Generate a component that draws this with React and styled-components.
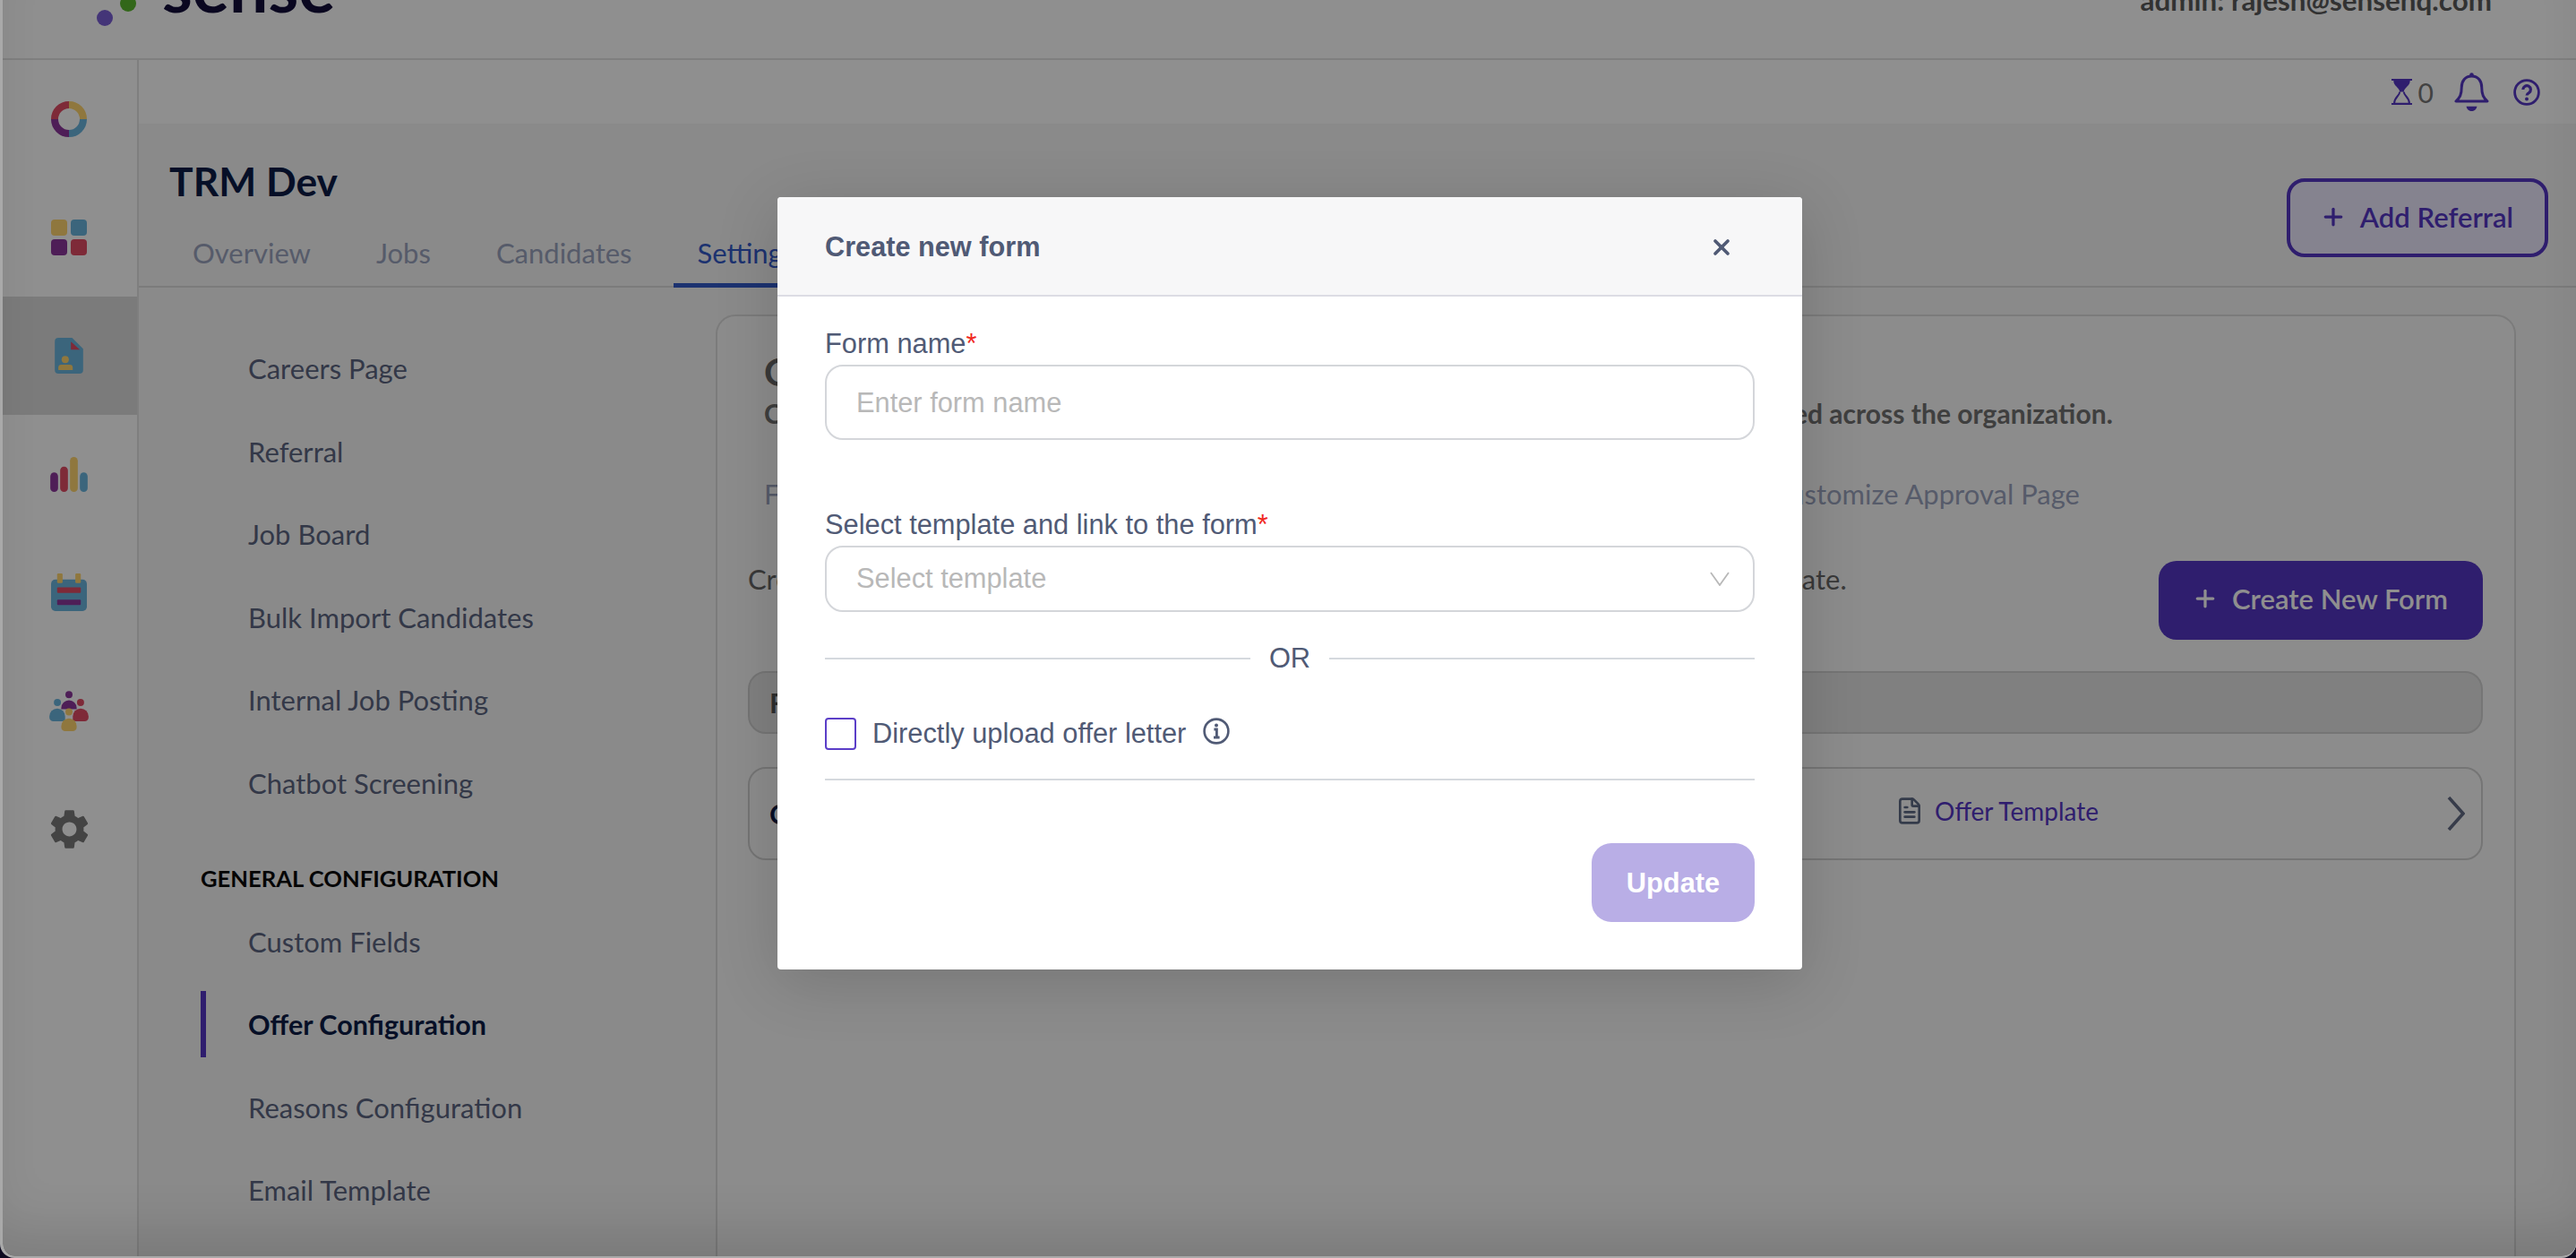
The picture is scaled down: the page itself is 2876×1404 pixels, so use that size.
import React from "react";
import styled, { createGlobalStyle } from "styled-components";
import { MdSettings } from "react-icons/md";
import { FileText, Plus, X } from "lucide-react";

const GlobalStyle = createGlobalStyle`
  html, body { margin: 0; padding: 0; height: 100%; background: #0d0a20; }
  * { box-sizing: border-box; }
  body { font-family: Lato, "Liberation Sans", sans-serif; }
`;

const PURPLE = "#5436c4";
const SLATE = "#505a75";
const GOLD = "#ffd56f";
const BLUE = "#6ab5de";
const PLUM = "#8c379b";
const RED = "#e14b64";

// ─── window ──────────────────────────────────────────

const Screen = styled.div`
  width: 2876px;
  height: 1404px;
  background: #0d0a20;
  overflow: hidden;
`;

const Window = styled.div`
  position: relative;
  width: 100%;
  height: 100%;
  background: #fff;
  border-left: 3px solid #a9a9a9;
  border-bottom: 2px solid #a9a9a9;
  border-radius: 0 0 16px 16px;
  overflow: hidden;
  display: flex;
  flex-direction: column;
`;

const Header = styled.header`
  flex: none;
  height: 67px;
  display: flex;
  justify-content: space-between;
  background: #fff;
  border-bottom: 2px solid #e3e3e3;
  overflow: hidden;
`;

const Logo = styled.div`
  display: flex;
  align-items: flex-end;
  height: 30px;
  margin: 0 0 0 98px;
`;

const LogoName = styled.span`
  margin: 0 0 -4px 26px;
  font-size: 77px;
  line-height: 100px;
  font-weight: 700;
  color: #120e3a;
`;

const AdminName = styled.span`
  margin: -18px 94px 0 0;
  font-size: 31.4px;
  line-height: 36px;
  font-weight: 700;
  color: #5a5a5a;
`;

const Layout = styled.div`
  flex: 1;
  min-height: 0;
  display: flex;
`;

// ─── left rail ───────────────────────────────────────

const Rail = styled.nav`
  flex: none;
  width: 152px;
  background: #fff;
  border-right: 2px solid #e3e3e3;
`;

const RailItem = styled.div`
  height: 132px;
  display: flex;
  align-items: center;
  justify-content: center;
  padding-right: 2px;
  background: ${(p) => (p.$active ? "#dcdcdc" : "transparent")};
  color: #7a7a7a;
`;

// ─── main ────────────────────────────────────────────

const Main = styled.main`
  flex: 1;
  min-width: 0;
  display: flex;
  flex-direction: column;
  background: #f6f6f6;
`;

const TopStrip = styled.div`
  flex: none;
  height: 71px;
  display: flex;
  align-items: center;
  justify-content: flex-end;
  padding: 0 40px 0 0;
  background: #fff;
  color: ${PURPLE};
`;

const Count = styled.span`
  margin: 0 23px 0 7px;
  font-size: 30px;
  color: #777;
`;

const BellGlyph = styled.svg`
  margin: 0 27px 0 0;
`;

const PageHead = styled.div`
  flex: none;
  height: 183px;
  display: flex;
  justify-content: space-between;
  padding: 0 31px 0 34px;
  border-bottom: 2px solid #dcdcdc;
`;

const PageTitle = styled.h1`
  margin: 39px 0 0;
  font-size: 44.4px;
  line-height: 50px;
  font-weight: 700;
  color: #0c1c46;
`;

const Tabs = styled.div`
  display: flex;
  gap: 21px;
  margin-top: 20px;
`;

const Tab = styled.div`
  height: 74px;
  padding: 0 26px;
  display: flex;
  align-items: center;
  font-size: 31px;
  color: ${(p) => (p.$active ? "#3359c8" : "#9aa3bd")};
  border-bottom: 5px solid ${(p) => (p.$active ? "#3359c8" : "transparent")};
`;

const OutlineButton = styled.button`
  height: 88px;
  width: 292px;
  margin-top: 61px;
  padding: 0 2px 2px 0;
  display: flex;
  align-items: center;
  justify-content: center;
  gap: 15px;
  font: 600 31px Lato, sans-serif;
  color: ${PURPLE};
  background: #eeeaff;
  border: 4px solid ${PURPLE};
  border-radius: 20px;
`;

const Split = styled.div`
  flex: 1;
  min-height: 0;
  display: flex;
`;

const SideMenu = styled.div`
  flex: none;
  width: 644px;
  padding: 53px 0 0 69px;
`;

const MenuItem = styled.div`
  height: 74px;
  margin: 0 0 18.5px;
  padding-left: 47px;
  display: flex;
  align-items: center;
  font-size: ${(p) => (p.$active ? 30.5 : 31)}px;
  font-weight: ${(p) => (p.$active ? 700 : 400)};
  color: ${(p) => (p.$active ? "#0c1c46" : "#5c6580")};
  border-left: 6px solid ${(p) => (p.$active ? PURPLE : "transparent")};
`;

const MenuHeading = styled.div`
  height: 40px;
  margin: 49px 0 14px;
  display: flex;
  align-items: center;
  font-size: 25.6px;
  font-weight: 700;
  color: #0a0a0a;
`;

const Card = styled.section`
  flex: 1;
  min-width: 0;
  height: 1200px;
  margin: 30px 67px 0 0;
  padding: 37px 35px 0 34px;
  background: #fafafa;
  border: 2px solid #dcdcdc;
  border-radius: 22px;
`;

const CardTitle = styled.h2`
  margin: 0 0 0 18px;
  font-size: 42px;
  line-height: 50px;
  font-weight: 700;
  color: #666;
`;

const CardSubtitle = styled.p`
  margin: 1px 0 0 18px;
  font-size: 30.06px;
  line-height: 40px;
  font-weight: 700;
  white-space: nowrap;
  color: #707070;
`;

const SubTabs = styled.div`
  display: flex;
  justify-content: space-between;
  width: 1469px;
  margin: 45px 0 0 18px;
  font-size: 31px;
  line-height: 50px;
  color: #9aa3bd;
`;

const IntroRow = styled.div`
  display: flex;
  justify-content: space-between;
  margin-top: 50px;
`;

const IntroText = styled.p`
  margin: 0;
  font-size: 31px;
  line-height: 40px;
  white-space: nowrap;
  color: #666;
`;

const PrimaryButton = styled.button`
  width: 362px;
  height: 88px;
  padding: 0 2px 4px 0;
  display: flex;
  align-items: center;
  justify-content: center;
  gap: 15px;
  font: 600 31px Lato, sans-serif;
  color: #fff;
  background: ${PURPLE};
  border: none;
  border-radius: 20px;
`;

const TableHead = styled.div`
  height: 70px;
  margin-top: 35px;
  padding-left: 22px;
  display: flex;
  align-items: center;
  font-size: 31px;
  font-weight: 700;
  color: #555;
  background: #e4e4e4;
  border: 2px solid #d0d0d0;
  border-radius: 20px;
`;

const TableRow = styled.div`
  height: 104px;
  margin-top: 37px;
  padding: 0 18px 0 22px;
  display: flex;
  align-items: center;
  border: 2px solid #d0d0d0;
  border-radius: 20px;
`;

const RowName = styled.span`
  flex: 1;
  font-size: 31px;
  font-weight: 700;
  color: #0c1c46;
`;

const RowLink = styled.span`
  display: flex;
  align-items: center;
  gap: 12px;
  margin: 0 389px 7px 0;
  font-size: 28px;
  color: ${PURPLE};
`;

const RowFile = styled(FileText)`
  color: #5e6a85;
`;

// ─── dialog ──────────────────────────────────────────

const Backdrop = styled.div`
  position: absolute;
  inset: 0;
  display: flex;
  justify-content: center;
  align-items: flex-start;
  padding: 220px 0 0 1px;
  background: rgba(0, 0, 0, 0.44);
  box-shadow: inset 0 -46px 60px -20px rgba(0, 0, 0, 0.13);
`;

const Dialog = styled.div`
  width: 1144px;
  background: #fff;
  border-radius: 4px;
  box-shadow: 0 14px 70px rgba(0, 0, 0, 0.16);
  font-family: "Liberation Sans", Arial, sans-serif;
  color: ${SLATE};
`;

const DialogHeader = styled.div`
  height: 111px;
  display: flex;
  align-items: center;
  justify-content: space-between;
  padding: 2px 76px 0 53px;
  background: #f7f7f8;
  border-bottom: 2px solid #dcdce4;
  border-radius: 4px 4px 0 0;
`;

const DialogTitle = styled.h3`
  margin: 0;
  font-size: 30.7px;
  font-weight: 700;
  color: ${SLATE};
`;

const CloseIcon = styled(X)`
  color: ${SLATE};
`;

const DialogBody = styled.div`
  padding: 35px 53px 53px;
`;

const FieldLabel = styled.label`
  display: block;
  margin-top: ${(p) => p.$top || 0}px;
  font-size: 30.8px;
  line-height: 36px;
`;

const Required = styled.span`
  color: #f0281e;
`;

const TextInput = styled.input`
  display: block;
  width: 100%;
  height: 84px;
  margin-top: 5px;
  padding: 2px 33px 0;
  font: 30.8px "Liberation Sans", Arial, sans-serif;
  color: ${SLATE};
  background: #fff;
  border: 2px solid #d4d6da;
  border-radius: 20px;
  outline: none;
  &::placeholder { color: #b8b8b8; opacity: 1; }
`;

const SelectBox = styled.div`
  height: 74px;
  margin-top: 5px;
  padding: 0 26px 0 33px;
  display: flex;
  align-items: center;
  justify-content: space-between;
  font-size: 30.8px;
  color: #b8b8b8;
  border: 2px solid #d4d6da;
  border-radius: 20px;
`;

const OrRow = styled.div`
  height: 40px;
  margin-top: 32px;
  display: flex;
  align-items: center;
  gap: 21px;
  font-size: 30.8px;
`;

const Line = styled.div`
  flex: 1;
  height: 2px;
  background: #d5d9de;
`;

const CheckRow = styled.div`
  margin-top: 46px;
  display: flex;
  align-items: center;
  height: 36px;
  font-size: 30.8px;
`;

const CheckBox = styled.span`
  flex: none;
  width: 35px;
  height: 36px;
  margin-right: 18px;
  border: 2px solid #5b3ec8;
  border-radius: 4px;
`;

const InfoGlyph = styled.svg`
  margin: -6px 0 0 19px;
`;

const Divider = styled.div`
  height: 2px;
  margin-top: 32px;
  background: #d5d9de;
`;

const Footer = styled.div`
  margin-top: 70px;
  display: flex;
  justify-content: flex-end;
`;

const UpdateButton = styled.button`
  width: 182px;
  height: 88px;
  padding: 2px 0 0;
  font: 700 30.8px "Liberation Sans", Arial, sans-serif;
  color: #fff;
  background: #b9aee6;
  border: none;
  border-radius: 22px;
`;

// ─── icons ───────────────────────────────────────────

const donut = (
  <svg width="40" height="40" viewBox="0 0 40 40" fill="none" strokeWidth="8">
    <path d="M20 4a16 16 0 0 1 16 16" stroke={GOLD} />
    <path d="M36 20a16 16 0 0 1-16 16" stroke={BLUE} />
    <path d="M20 36A16 16 0 0 1 4 20" stroke={PLUM} />
    <path d="M4 20A16 16 0 0 1 20 4" stroke={RED} />
  </svg>
);

const squares = (
  <svg width="40" height="40" viewBox="0 0 40 40">
    <rect width="18" height="18" rx="4" fill={GOLD} />
    <rect x="22" width="18" height="18" rx="4" fill={BLUE} />
    <rect y="22" width="18" height="18" rx="4" fill={PLUM} />
    <rect x="22" y="22" width="18" height="18" rx="4" fill={RED} />
  </svg>
);

const fileCard = (
  <svg width="32" height="40" viewBox="0 0 95 120">
    <path d="M12 0H58L95 37V108a12 12 0 0 1-12 12H12a12 12 0 0 1-12-12V12A12 12 0 0 1 12 0Z" fill={BLUE} />
    <path d="M54 13V40H84Z" fill={RED} />
    <circle cx="35" cy="73" r="12" fill={GOLD} />
    <path d="M12 108V100a10 10 0 0 1 10-10H50a10 10 0 0 1 10 10V108Z" fill={GOLD} />
  </svg>
);

const bars = (
  <svg width="42" height="39" viewBox="0 0 125 117">
    <rect y="52" width="26" height="65" rx="13" fill={PLUM} />
    <rect x="33" y="32" width="26" height="85" rx="13" fill={RED} />
    <rect x="66" width="26" height="117" rx="13" fill={GOLD} />
    <rect x="99" y="52" width="26" height="65" rx="13" fill={BLUE} />
  </svg>
);

const calendar = (
  <svg width="40" height="42" viewBox="0 0 118 124">
    <rect y="20" width="118" height="104" rx="14" fill={BLUE} />
    <rect x="20" width="18" height="32" rx="4" fill={GOLD} />
    <rect x="80" width="18" height="32" rx="4" fill={GOLD} />
    <rect x="20" y="46" width="78" height="18" rx="3" fill={RED} />
    <rect x="20" y="86" width="78" height="18" rx="3" fill={PLUM} />
  </svg>
);

const people = (
  <svg width="44" height="45" viewBox="0 0 132 136">
    <circle cx="66" cy="13" r="12" fill={PLUM} />
    <path d="M40 62V58a26 26 0 0 1 52 0V62Z" fill={PLUM} />
    <circle cx="27" cy="39" r="12" fill={BLUE} />
    <path d="M0 90V86a26 26 0 0 1 53 0V103H13A13 13 0 0 1 0 90Z" fill={BLUE} />
    <circle cx="105" cy="39" r="12" fill={RED} />
    <path d="M132 90V86a26 26 0 0 0-53 0V103H119A13 13 0 0 0 132 90Z" fill={RED} />
    <circle cx="66" cy="71" r="12" fill={GOLD} />
    <path d="M40 123V119a26 26 0 0 1 52 0V123A13 13 0 0 1 79 136H53A13 13 0 0 1 40 123Z" fill={GOLD} />
  </svg>
);

const railIcons = [
  { key: "home", icon: donut },
  { key: "apps", icon: squares },
  { key: "jobs", icon: fileCard, active: true },
  { key: "reports", icon: bars },
  { key: "calendar", icon: calendar },
  { key: "people", icon: people },
  { key: "settings", icon: <MdSettings size={53} /> },
];

const mainTabs = ["Overview", "Jobs", "Candidates", "Settings"];

const topMenu = ["Careers Page", "Referral", "Job Board", "Bulk Import Candidates", "Internal Job Posting", "Chatbot Screening"];
const configMenu = ["Custom Fields", "Offer Configuration", "Reasons Configuration", "Email Template"];

export default function App() {
  return (
    <Screen>
      <GlobalStyle />
      <Window>
        <Header>
          <Logo>
            <svg width="54" height="31" viewBox="0 0 54 31">
              <circle cx="16" cy="21" r="9" fill="#7a5fd6" />
              <circle cx="42" cy="5" r="9" fill="#5ab82e" />
            </svg>
            <LogoName>sense</LogoName>
          </Logo>
          <AdminName>admin: rajesh@sensehq.com</AdminName>
        </Header>

        <Layout>
          <Rail>
            {railIcons.map((r) => (
              <RailItem key={r.key} $active={r.active}>{r.icon}</RailItem>
            ))}
          </Rail>

          <Main>
            <TopStrip>
              <svg width="23" height="29" viewBox="0 0 70 88" fill="currentColor">
                <path d="M0 0H70V6H63C63 25 42 30 42 44H28C28 30 7 25 7 6H0Z" />
                <path d="M28 44C28 58 9 62 9 84H61C61 62 42 58 42 44" fill="none" stroke="currentColor" strokeWidth="6" />
                <rect y="82" width="70" height="6" />
              </svg>
              <Count>0</Count>
              <BellGlyph width="39" height="43" viewBox="0 0 116 130" fill="currentColor">
                <circle cx="58" cy="8" r="7" />
                <path d="M58 12C35 12 24 30 24 50C24 75 18 85 5 97H111C98 85 92 75 92 50C92 30 81 12 58 12Z" fill="none" stroke="currentColor" strokeWidth="9" strokeLinejoin="round" />
                <path d="M40 114H76C74 125 66 130 58 130C50 130 42 125 40 114Z" />
              </BellGlyph>
              <svg width="30" height="30" viewBox="0 0 30 30" fill="none" stroke="currentColor">
                <circle cx="15" cy="15" r="13.4" strokeWidth="2.8" />
                <path d="M10.8 12a4.3 4.3 0 1 1 6.6 3.6c-1.5.9-2.3 1.5-2.3 3" strokeWidth="3.2" />
                <circle cx="15" cy="22.6" r="2" fill="currentColor" stroke="none" />
              </svg>
            </TopStrip>

            <PageHead>
              <div>
                <PageTitle>TRM Dev</PageTitle>
                <Tabs>
                  {mainTabs.map((t) => (
                    <Tab key={t} $active={t === "Settings"}>{t}</Tab>
                  ))}
                </Tabs>
              </div>
              <OutlineButton>
                <Plus size={30} strokeWidth={2.6} />
                Add Referral
              </OutlineButton>
            </PageHead>

            <Split>
              <SideMenu>
                {topMenu.map((m) => (
                  <MenuItem key={m}>{m}</MenuItem>
                ))}
                <MenuHeading>GENERAL CONFIGURATION</MenuHeading>
                {configMenu.map((m) => (
                  <MenuItem key={m} $active={m === "Offer Configuration"}>{m}</MenuItem>
                ))}
              </SideMenu>

              <Card>
                <CardTitle>Offer Configuration</CardTitle>
                <CardSubtitle>Configure offer forms, templates and approval flows that can be created, edited and used across the organization.</CardSubtitle>
                <SubTabs>
                  <span>Forms</span>
                  <span>Approval Flows</span>
                  <span>Customize Approval Page</span>
                </SubTabs>
                <IntroRow>
                  <IntroText>Create new offer form and link it to an existing template or upload a new custom template.</IntroText>
                  <PrimaryButton>
                    <Plus size={30} strokeWidth={2.6} />
                    Create New Form
                  </PrimaryButton>
                </IntroRow>
                <TableHead>Form Name</TableHead>
                <TableRow>
                  <RowName>Offer Form</RowName>
                  <RowLink>
                    <RowFile size={32} strokeWidth={2} />
                    Offer Template
                  </RowLink>
                  <svg width="20" height="38" viewBox="0 0 20 38" fill="none" stroke="#626b85" strokeWidth="3.6">
                    <path d="M2 1L18 19L2 37" />
                  </svg>
                </TableRow>
              </Card>
            </Split>
          </Main>
        </Layout>

        <Backdrop>
          <Dialog>
            <DialogHeader>
              <DialogTitle>Create new form</DialogTitle>
              <CloseIcon size={28} strokeWidth={3.2} />
            </DialogHeader>
            <DialogBody>
              <FieldLabel>Form name<Required>*</Required></FieldLabel>
              <TextInput placeholder="Enter form name" />
              <FieldLabel $top={77}>Select template and link to the form<Required>*</Required></FieldLabel>
              <SelectBox>
                Select template
                <svg width="22" height="16" viewBox="0 0 22 16" fill="none" stroke="#b8b8b8" strokeWidth="1.8">
                  <path d="M1 1L11 15L21 1" />
                </svg>
              </SelectBox>
              <OrRow>
                <Line />
                OR
                <Line />
              </OrRow>
              <CheckRow>
                <CheckBox />
                Directly upload offer letter
                <InfoGlyph width="30" height="30" viewBox="0 0 30 30" fill="none" stroke={SLATE}>
                  <circle cx="15" cy="15" r="13.4" strokeWidth="2.6" />
                  <circle cx="15" cy="8.6" r="2" fill={SLATE} stroke="none" />
                  <path d="M12.4 13H15.4V21.4M12 22H18.6" strokeWidth="2.8" />
                </InfoGlyph>
              </CheckRow>
              <Divider />
              <Footer>
                <UpdateButton>Update</UpdateButton>
              </Footer>
            </DialogBody>
          </Dialog>
        </Backdrop>
      </Window>
    </Screen>
  );
}
